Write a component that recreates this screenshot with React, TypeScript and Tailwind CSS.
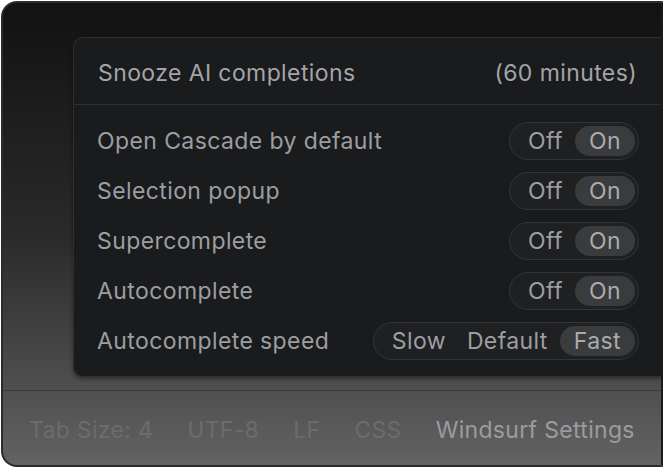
import React from 'react';

const rows: { label: string; options: string[]; active: string }[] = [
  { label: 'Open Cascade by default', options: ['Off', 'On'], active: 'On' },
  { label: 'Selection popup', options: ['Off', 'On'], active: 'On' },
  { label: 'Supercomplete', options: ['Off', 'On'], active: 'On' },
  { label: 'Autocomplete', options: ['Off', 'On'], active: 'On' },
  { label: 'Autocomplete speed', options: ['Slow', 'Default', 'Fast'], active: 'Fast' },
];

const Segmented = ({ options, active }: { options: string[]; active: string }) => (
  <div className="flex items-center h-[38px] rounded-full border border-[#333437] bg-[#1f2022] p-[3px] pl-[9px] gap-[3px]">
    {options.map((o) => (
      <span
        key={o}
        className={
          o === active
            ? 'h-full flex items-center px-[14px] rounded-full bg-[#3a3b3d] text-[#a9abaf]'
            : 'h-full flex items-center px-[9px] text-[#9c9ea2]'
        }
      >
        {o}
      </span>
    ))}
  </div>
);

export default function App() {
  return (
    <div
      className="w-[664px] h-[468px] bg-white p-[1px] overflow-hidden tracking-[0.02em]"
      style={{ fontFamily: 'Inter, "Noto Sans", sans-serif' }}
    >
      <div className="w-full h-full flex flex-col rounded-l-[16px] border-2 border-[#2b2b2b] border-r-[#1a1a1a] bg-gradient-to-b from-[#121212] via-[#2a2a2a] to-[#636363] overflow-hidden">
        <div className="pt-[34px] pl-[70px] pb-[13px]">
          <div className="rounded-l-[10px] border border-r-0 border-[#2e2f31] bg-[#1a1b1d] shadow-[0_2px_4px_rgba(0,0,0,0.4)] tracking-[0.025em]">
            <div className="h-[67px] pt-[4px] flex items-center justify-between pl-[24px] pr-[24px] border-b border-[#2e2f31] text-[23px] text-[#a3a5a9]">
              <span>Snooze AI completions</span>
              <span>(60 minutes)</span>
            </div>
            <div className="pt-[11px] pb-[10px]">
              {rows.map((r) => (
                <div key={r.label} className="h-[50px] flex items-center justify-between pl-[23px] pr-[22px] text-[23px] text-[#9c9ea2]">
                  <span>{r.label}</span>
                  <Segmented options={r.options} active={r.active} />
                </div>
              ))}
            </div>
          </div>
        </div>
        <div className="flex-1 pt-[4px] border-t border-[#3a3a3a] flex items-center gap-[34px] pl-[26px] text-[23px] text-[#6b6c6e]">
          <span>Tab Size: 4</span>
          <span>UTF-8</span>
          <span>LF</span>
          <span>CSS</span>
          <span className="text-[#9a9ca0]">Windsurf Settings</span>
        </div>
      </div>
    </div>
  );
}
